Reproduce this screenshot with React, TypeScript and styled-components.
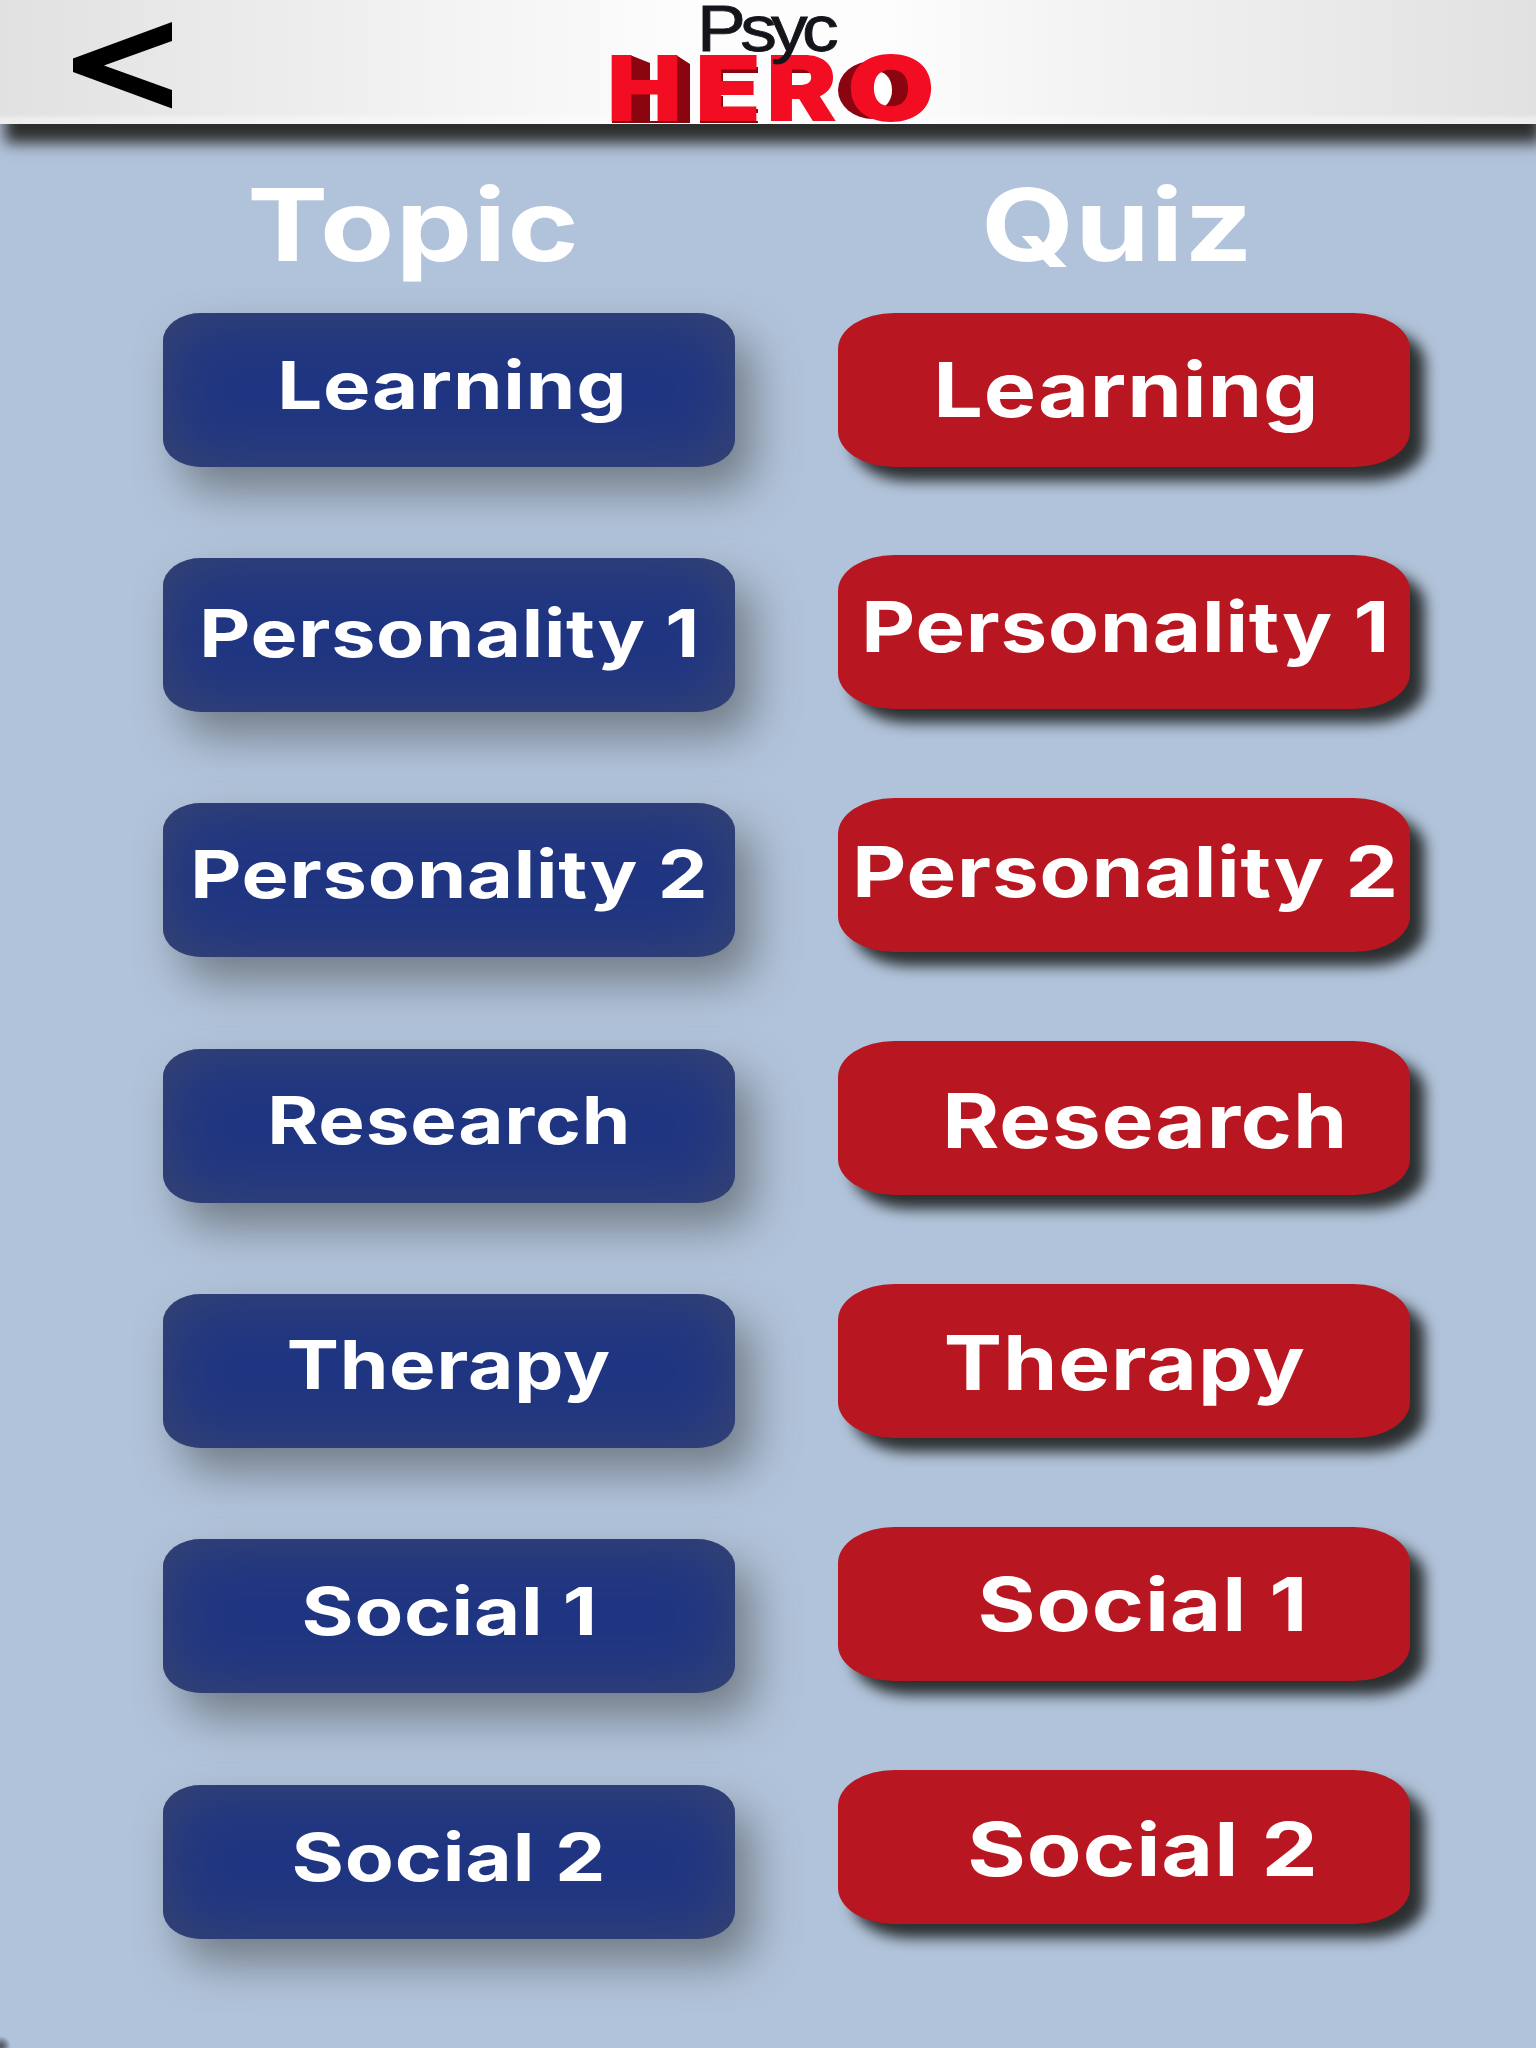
import React, { useLayoutEffect, useRef, useState } from "react";
import styled, { createGlobalStyle } from "styled-components";

const GlobalStyle = createGlobalStyle`
  *, *::before, *::after { box-sizing: border-box; }
  html, body { margin: 0; padding: 0; background: #b1c3da; }
  body { width: 1536px; height: 2048px; overflow: hidden; }
`;

const FONT = '"Inter", "Liberation Sans", sans-serif';

const Screen = styled.div`
  display: flex;
  flex-direction: column;
  width: 1536px;
  height: 2048px;
  overflow: hidden;
  background:
    radial-gradient(circle at 1px 2046px, #4c5566 0, #6d7889 4px, rgba(177, 195, 218, 0) 10px),
    #b1c3da;
  font-family: ${FONT};
`;

const Header = styled.header`
  display: flex;
  flex: 0 0 124px;
  align-items: flex-start;
  background:
    linear-gradient(to bottom, rgba(255, 255, 255, 0) 114px, rgba(255, 255, 255, 0.4) 119px),
    linear-gradient(to right, #e1e1e1 0, #ececec 270px, #f6f6f6 520px, #fdfdfe 700px, #fdfdfe 880px, #f3f3f3 1080px, #e9e9e9 1340px, #e1e1e1 1536px);
  box-shadow: 5px 19px 14px #2d2d2d;
`;

const BackButton = styled.button`
  display: block;
  width: 120px;
  height: 124px;
  margin: 0 0 0 62px;
  padding: 0;
  border: 0;
  background: none;
`;

const LogoLink = styled.div`
  width: 340px;
  height: 124px;
  margin-left: 418px;
`;

const Art = styled.svg`
  display: block;
  overflow: visible;
`;

const Board = styled.main`
  display: flex;
  gap: 103px;
  padding-left: 163px;
`;

const Column = styled.section<{ $gap: number }>`
  display: flex;
  flex-direction: column;
  gap: ${(p) => p.$gap}px;
  width: 572px;
`;

const Heading = styled.h1<{ $gap: number }>`
  display: flex;
  align-items: flex-start;
  height: 188.5px;
  margin: 0 0 ${(p) => -p.$gap}px;
  font-size: 100px;
`;

const Tile = styled.button<{ $tone: "blue" | "red" }>`
  display: flex;
  align-items: flex-start;
  flex: 0 0 154px;
  width: 572px;
  margin: 0;
  padding: 0;
  border: 0;
  font-family: inherit;
  ${(p) =>
    p.$tone === "blue"
      ? `
    border-radius: 38px / 28px;
    background: #203682;
    box-shadow:
      inset 0 0 64px rgba(62, 72, 108, 0.88),
      18px 24px 44px rgba(92, 98, 104, 0.72);
  `
      : `
    border-radius: 56px / 36px;
    background: #b81722;
    box-shadow: 15px 14px 14px #2b2f30;
  `}
`;

// Inter centres its capitals in the line box, so the baseline sits
// 0.3638em under the middle of a 96px line.
const LabelText = styled.span<{ $size: number; $left: number; $baseline: number }>`
  display: block;
  flex: none;
  margin-left: ${(p) => p.$left}px;
  margin-top: ${(p) => p.$baseline - 48 - p.$size * 0.3638}px;
  color: #fff;
  font: 700 ${(p) => p.$size}px/96px ${FONT};
  letter-spacing: 0.01em;
  white-space: nowrap;
  transform-origin: 0 50%;
`;

type LabelProps = { text: string; size: number; left: number; width: number; baseline: number };

/** A label stretched so that its visible glyphs span exactly `width`. */
function Label({ text, size, left, width, baseline }: LabelProps) {
  const ref = useRef<HTMLSpanElement>(null);
  const [transform, setTransform] = useState("none");

  useLayoutEffect(() => {
    const ctx = document.createElement("canvas").getContext("2d");
    if (!ctx || !ref.current) return;
    ctx.font = `700 ${size}px ${FONT}`;
    const m = ctx.measureText(text);
    const full = ref.current.offsetWidth;
    const bearingLeft = -m.actualBoundingBoxLeft;
    const bearingRight = m.width - m.actualBoundingBoxRight + size * 0.01;
    const scale = width / (full - bearingLeft - bearingRight);
    setTransform(`translateX(${-bearingLeft * scale}px) scaleX(${scale})`);
  }, [text, size, width]);

  return (
    <LabelText ref={ref} $size={size} $left={left} $baseline={baseline} style={{ transform }}>
      {text}
    </LabelText>
  );
}

const topics: LabelProps[] = [
  { text: "Learning", size: 66, left: 119, width: 340, baseline: 96.5 },
  { text: "Personality 1", size: 66, left: 41, width: 491, baseline: 99.5 },
  { text: "Personality 2", size: 66, left: 32, width: 508, baseline: 94.5 },
  { text: "Research", size: 66, left: 109, width: 354, baseline: 95.5 },
  { text: "Therapy", size: 67, left: 126, width: 321, baseline: 95 },
  { text: "Social 1", size: 66, left: 141, width: 289, baseline: 96 },
  { text: "Social 2", size: 66, left: 131, width: 307, baseline: 96 },
];

const quizzes: LabelProps[] = [
  { text: "Learning", size: 76, left: 101, width: 375, baseline: 104.5 },
  { text: "Personality 1", size: 70, left: 28, width: 518, baseline: 97 },
  { text: "Personality 2", size: 70, left: 19, width: 537, baseline: 99.5 },
  { text: "Research", size: 76, left: 110, width: 394, baseline: 106 },
  { text: "Therapy", size: 76, left: 108, width: 358, baseline: 106 },
  { text: "Social 1", size: 74, left: 143, width: 322, baseline: 104 },
  { text: "Social 2", size: 74, left: 133, width: 343, baseline: 106 },
];

function BackIcon() {
  return (
    <Art width="120" height="124" viewBox="62 0 120 124" aria-hidden>
      <path d="M172 22 L73 58.5 V72 L172 108.5 V90 L104 65.5 L172 41 Z" fill="#000" />
    </Art>
  );
}

const heroLetters = [
  { ch: "H", x: 607, w: 75 },
  { ch: "E", x: 695, w: 66 },
  { ch: "R", x: 766, w: 71 },
  { ch: "O", x: 847, w: 88 },
];

function Logo() {
  return (
    <Art width="340" height="124" viewBox="600 0 340 124" role="img" aria-label="Psyc Hero">
      <g fill="#8a0510">
        <path d="M630 55 L650 63 V121 H628 Z" />
        <path d="M676 55 L690 64 V121 H675 Z" />
        <path d="M716 67 H758 V73 H723 V82 H716 Z M716 96 H723 V109 H758 V113 H716 Z" />
        <path d="M786 67 H812 V73 H792 V85 H786 Z M786 96 H791 V121 H786 Z" />
        <path d="M612 121 H690 V123 H612 Z M700 121 H758 V123 H700 Z" />
        <ellipse cx="873" cy="90" rx="35" ry="29" />
        <ellipse cx="891" cy="88" rx="30" ry="26" />
      </g>
      <ellipse cx="879" cy="90" rx="13" ry="18" fill="#fff" />
      <g fill="#f20d22" fontFamily={FONT} fontWeight="900" fontSize="91">
        {heroLetters.map((l) => (
          <text key={l.ch} x={l.x} y="121" textLength={l.w} lengthAdjust="spacingAndGlyphs">
            {l.ch}
          </text>
        ))}
      </g>
      <text
        x="697"
        y="50.5"
        fill="#14151b"
        fontFamily='"Liberation Sans", Arial, sans-serif'
        fontSize="64"
        letterSpacing="-5"
        textLength="136"
        lengthAdjust="spacingAndGlyphs"
        stroke="#14151b"
        strokeWidth="0.8"
      >
        Psyc
      </text>
    </Art>
  );
}

export default function App() {
  return (
    <>
      <GlobalStyle />
      <Screen>
        <Header>
          <BackButton aria-label="Back">
            <BackIcon />
          </BackButton>
          <LogoLink>
            <Logo />
          </LogoLink>
        </Header>
        <Board>
          <Column $gap={91.4}>
            <Heading $gap={91.4}>
              <Label text="Topic" size={100} left={88} width={324} baseline={137} />
            </Heading>
            {topics.map((t) => (
              <Tile key={t.text} $tone="blue">
                <Label {...t} />
              </Tile>
            ))}
          </Column>
          <Column $gap={88.9}>
            <Heading $gap={88.9}>
              <Label text="Quiz" size={100} left={148} width={260} baseline={137} />
            </Heading>
            {quizzes.map((q) => (
              <Tile key={q.text} $tone="red">
                <Label {...q} />
              </Tile>
            ))}
          </Column>
        </Board>
      </Screen>
    </>
  );
}
